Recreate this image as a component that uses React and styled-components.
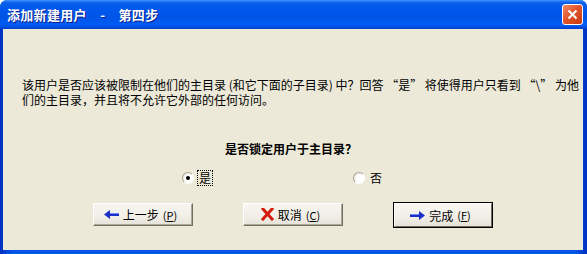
import styled, { createGlobalStyle } from "styled-components";

const GlobalStyle = createGlobalStyle`
  html, body {
    margin: 0;
    padding: 0;
    width: 587px;
    height: 254px;
    overflow: hidden;
    background: #ffffff;
  }
  * { box-sizing: border-box; }
`;

const FONT = `"Noto Sans CJK SC", "DejaVu Sans", sans-serif`;

const Window = styled.div`
  width: 587px;
  height: 254px;
  display: flex;
  flex-direction: column;
  border-radius: 7px 7px 0 0;
  overflow: hidden;
  background: #0842d6;
  font-family: ${FONT};
  font-size: 12px;
  color: #000;
`;

const TitleBar = styled.div`
  height: 29px;
  flex: none;
  display: flex;
  align-items: center;
  justify-content: space-between;
  padding: 0 4px 0 7px;
  background: linear-gradient(
    to bottom,
    #3d95ff 0%,
    #0a5fe8 10%,
    #0058ee 30%,
    #0054e6 60%,
    #005cf6 85%,
    #0050e0 93%,
    #003ccf 100%
  );
`;

const Title = styled.div`
  color: #ffffff;
  font-weight: bold;
  font-size: 13px;
  letter-spacing: 0.3px;
  text-shadow: 1px 1px 0 #0a1e8c;
  white-space: pre;
`;

const CloseButton = styled.div`
  width: 21px;
  height: 21px;
  border: 1px solid #ffffff;
  border-radius: 3px;
  background: linear-gradient(135deg, #f08a66 0%, #e2552c 45%, #c73a10 100%);
  display: flex;
  align-items: center;
  justify-content: center;
`;

const Frame = styled.div`
  flex: 1;
  display: flex;
  padding: 0 4px 4px 3px;
  background: linear-gradient(to right, #0030c0 0%, #0655e8 2%, #0655e8 98%, #0030c0 100%);
`;

const Content = styled.div`
  flex: 1;
  background: #ece9d8;
  display: flex;
  flex-direction: column;
`;

const Description = styled.p`
  margin: 48px 0 0 19px;
  line-height: 15px;
  white-space: nowrap;
`;

const Question = styled.div`
  margin-top: 35px;
  text-align: center;
  font-weight: bold;
  line-height: 14px;
  padding-right: 4px;
`;

const RadioRow = styled.div`
  margin-top: 14px;
  height: 16px;
  display: flex;
  align-items: center;
  padding-left: 179px;
  gap: 141px;
`;

const RadioOption = styled.label`
  display: flex;
  align-items: center;
  gap: 4px;
`;

const RadioCircle = styled.span`
  width: 12px;
  height: 12px;
  border-radius: 50%;
  border: 1px solid;
  border-color: #a7a394 #ffffff #ffffff #a7a394;
  background: radial-gradient(circle at 60% 60%, #ffffff 40%, #e4e1d6 100%);
  display: flex;
  align-items: center;
  justify-content: center;

  &::after {
    content: "";
    width: 4px;
    height: 4px;
    border-radius: 50%;
    background: #000;
    display: ${(p) => (p.$checked ? "block" : "none")};
  }
`;

const RadioLabel = styled.span`
  padding: 0 1px;
  line-height: 14px;
  outline: ${(p) => (p.$focused ? "1px dotted #000" : "none")};
  outline-offset: 0;
`;

const ButtonRow = styled.div`
  margin-top: 17px;
  display: flex;
  justify-content: center;
  gap: 50px;
  padding-right: 1px;
`;

const Button = styled.div`
  width: 100px;
  height: ${(p) => (p.$default ? "24px" : "23px")};
  display: flex;
  align-items: center;
  justify-content: center;
  gap: 4px;
  background: linear-gradient(to bottom, #f7f6f1 0%, #f0eee6 60%, #e6e3d8 100%);
  border: 1px solid;
  border-color: #ffffff #716f64 #716f64 #ffffff;
  box-shadow: ${(p) =>
    p.$default ? "0 0 0 1px #000" : "inset -1px -1px 0 #aca899"};
  padding-right: 4px;
  ${(p) => (p.$default ? "margin: 0 1px; width: 98px;" : "")}
`;

const Key = styled.span`
  font-size: 11px;
  letter-spacing: 0;
  u { text-decoration: underline; }
`;

const ArrowLeft = () => (
  <svg width="15" height="9" viewBox="0 0 15 9">
    <path d="M0 4.5 L6 0 L6 3 L15 3 L15 6 L6 6 L6 9 Z" fill="#1c30c8" />
    <path d="M6 3 L15 3 L15 4 L6 4 Z" fill="#6a8cff" />
  </svg>
);

const ArrowRight = () => (
  <svg width="15" height="9" viewBox="0 0 15 9">
    <path d="M15 4.5 L9 0 L9 3 L0 3 L0 6 L9 6 L9 9 Z" fill="#1c30c8" />
    <path d="M0 3 L9 3 L9 4 L0 4 Z" fill="#6a8cff" />
  </svg>
);

const CrossIcon = () => (
  <svg width="13" height="13" viewBox="0 0 13 13">
    <path d="M2 1 L11 11 M11 1 L2 11" stroke="#d41a0a" strokeWidth="3" strokeLinecap="square" />
  </svg>
);

const CloseGlyph = () => (
  <svg width="11" height="11" viewBox="0 0 11 11">
    <path d="M1.5 1.5 L9.5 9.5 M9.5 1.5 L1.5 9.5" stroke="#ffffff" strokeWidth="2" />
  </svg>
);

export default function App() {
  return (
    <>
      <GlobalStyle />
      <Window>
        <TitleBar>
          <Title>添加新建用户{"\u3000"}-{"\u3000"}第四步</Title>
          <CloseButton>
            <CloseGlyph />
          </CloseButton>
        </TitleBar>
        <Frame>
          <Content>
            <Description>
              该用户是否应该被限制在他们的主目录 (和它下面的子目录) 中？回答 “是” 将使得用户只看到 “\” 为他
              <br />
              们的主目录，并且将不允许它外部的任何访问。
            </Description>
            <Question>是否锁定用户于主目录？</Question>
            <RadioRow>
              <RadioOption>
                <RadioCircle $checked />
                <RadioLabel $focused>是</RadioLabel>
              </RadioOption>
              <RadioOption>
                <RadioCircle />
                <RadioLabel>否</RadioLabel>
              </RadioOption>
            </RadioRow>
            <ButtonRow>
              <Button>
                <ArrowLeft />
                <span>上一步</span>
                <Key>(<u>P</u>)</Key>
              </Button>
              <Button>
                <CrossIcon />
                <span>取消</span>
                <Key>(<u>C</u>)</Key>
              </Button>
              <Button $default>
                <ArrowRight />
                <span>完成</span>
                <Key>(<u>F</u>)</Key>
              </Button>
            </ButtonRow>
          </Content>
        </Frame>
      </Window>
    </>
  );
}
